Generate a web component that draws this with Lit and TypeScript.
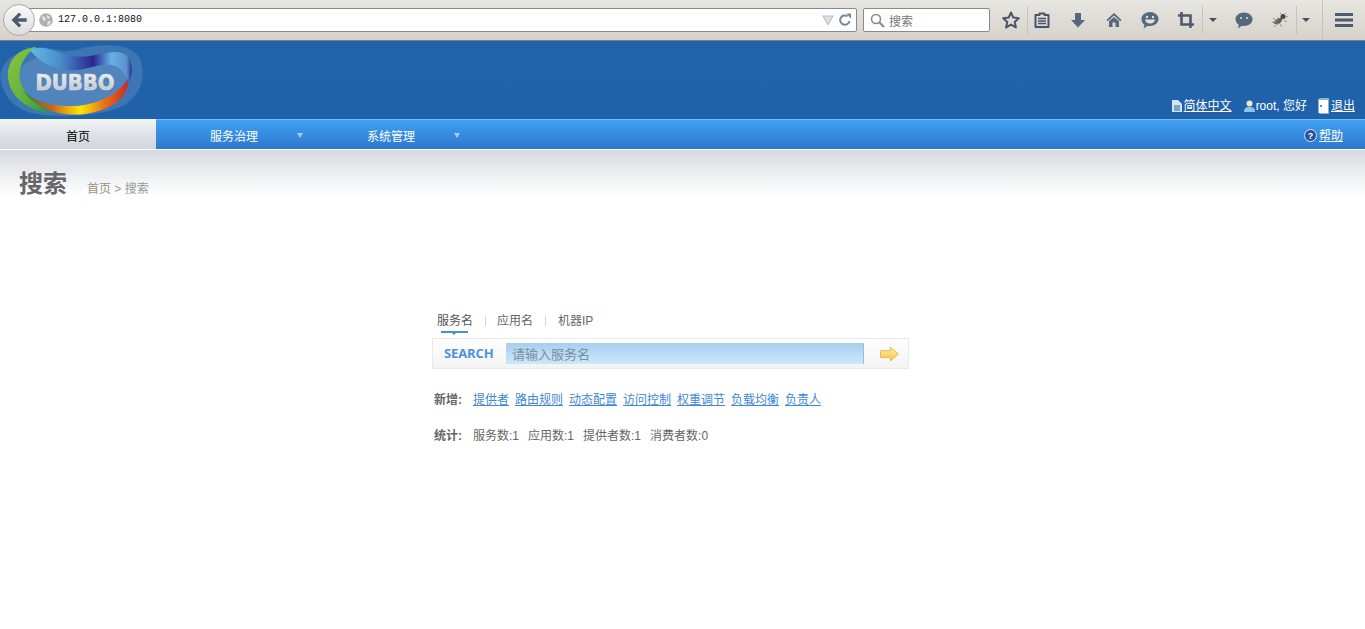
import { LitElement, css, html, svg } from 'lit';
import { customElement, state } from 'lit/decorators.js';

const links = ['提供者', '路由规则', '动态配置', '访问控制', '权重调节', '负载均衡', '负责人'];
const stats = ['服务数:1', '应用数:1', '提供者数:1', '消费者数:0'];

const star = svg`<path d="M9 1.500l2.300 5.100 5.500.6-4.100 3.700 1.200 5.500L9 13.600l-4.900 2.800 1.200-5.500L1.200 7.200l5.500-.6z" fill="none" stroke="#465568" stroke-width="2" stroke-linejoin="round"/>`;
const clipboard = svg`<path d="M6.500 2.500h5v1.500h4v12h-13V4h4z" fill="none" stroke="#465568" stroke-width="2" stroke-linejoin="round"/><path d="M5 7.500h8M5 10h8M5 12.500h8" stroke="#465568" stroke-width="1.500"/>`;
const download = svg`<path d="M6 2h6v7h4l-7 7.500L2 9h4z" fill="#56687c"/>`;
const home = svg`<path d="M9 2L1.500 9l1.200 1.200L9 4.600l6.300 5.600L16.500 9 9 2z" fill="#56687c"/><path d="M4 10.200L9 6l5 4.200V16h-3.500v-4.500h-3V16H4z" fill="#56687c"/>`;
const smile = svg`<path d="M9 1c4.600 0 8.500 2.900 8.500 7s-3.900 7-8.500 7c-.8 0-1.500-.1-2.200-.2L2.500 17.500l1-3.700C1.500 12.500.5 10.400.5 8 .5 3.900 4.400 1 9 1z" fill="#56687c"/><circle cx="6" cy="6" r="1.200" fill="#e4e1da"/><circle cx="12" cy="6" r="1.200" fill="#e4e1da"/><path d="M4 8.500h10c-.4 2.500-2.400 4-5 4s-4.600-1.500-5-4z" fill="#e4e1da"/>`;
const crop = svg`<path d="M4.500 1v12.500H17M1 4.500h12.500V17" fill="none" stroke="#4c5c6f" stroke-width="2.600"/>`;
const bubble = svg`<path d="M9 1.500c4.600 0 8.500 2.800 8.500 6.800s-3.900 6.700-8.500 6.700c-.8 0-1.500-.1-2.200-.2L3 17.500l.8-3.700C1.800 12.500.5 10.500.5 8.300.5 4.300 4.400 1.500 9 1.500z" fill="#56687c"/><circle cx="6" cy="7" r="1" fill="#e4e1da"/><circle cx="12" cy="7" r="1" fill="#e4e1da"/>`;
const bug = svg`<path d="M2 12c2-3 5-5 9-5.500 1 2.500-1 6-5 7z" fill="#5b5e62"/><circle cx="12" cy="5.500" r="2.500" fill="#44474a"/><path d="M2 7l5 3M1 11l5 0M3 16l4-4M9 2l2 2M15 2l-2 2M13 9l3 2M9 13l2 3M17 5l-3 1M6 6l2 2" stroke="#8a8c8e" stroke-width=".9"/>`;
const menu = svg`<path d="M0 3.500h18M0 9h18M0 14.500h18" stroke="#4c5c6f" stroke-width="2.800" stroke-linecap="round"/>`;

@customElement('app-root')
export class AppRoot extends LitElement {
  @state() activeTab = 0;

  static styles = css`
    :host {
      display: block;
      min-height: 100vh;
      background: #fff;
      font-family: 'Liberation Sans', 'Noto Sans CJK SC', sans-serif;
      font-size: 12px;
      color: #666;
      overflow: hidden;
    }

    a {
      color: inherit;
    }

    .browser {
      position: relative;
      display: flex;
      align-items: center;
      height: 40px;
      padding-left: 20px;
      background: linear-gradient(#e8e6e2, #d6d2cb);
      border-bottom: 1px solid #7f7d78;
    }

    .back {
      position: absolute;
      left: 3px;
      top: 4px;
      width: 30px;
      height: 30px;
      display: flex;
      align-items: center;
      justify-content: center;
      border: 1px solid #a9a9a9;
      border-radius: 50%;
      background: linear-gradient(#fafafa, #dcdcdc);
    }

    .url {
      display: flex;
      align-items: center;
      box-sizing: border-box;
      width: 837px;
      height: 24px;
      padding-left: 18px;
      border: 1px solid #8a8a8a;
      border-radius: 2px;
      background: #fff;
    }

    .url-text {
      margin-left: 5px;
      font: 10px/14px 'Liberation Mono', monospace;
      color: #111;
      flex: 1;
    }

    .url svg {
      display: block;
    }

    .dropmark,
    .reload {
      margin-right: 4px;
    }

    .search {
      display: flex;
      align-items: center;
      gap: 4px;
      box-sizing: border-box;
      width: 127px;
      height: 24px;
      margin-left: 6px;
      padding-left: 6px;
      border: 1px solid #8a8a8a;
      border-radius: 2px;
      background: #fff;
      font-size: 12px;
      color: #777;
    }

    .tools {
      display: flex;
      align-items: center;
      height: 100%;
      margin-left: 8px;
    }

    .tool {
      display: flex;
      align-items: center;
      justify-content: center;
      width: 36px;
      height: 100%;
    }

    .tool.w26 {
      width: 26px;
    }
    .tool.w18 {
      width: 18px;
    }
    .tool.w44 {
      width: 44px;
    }
    .tool.w28 {
      width: 28px;
    }
    .tool.w24 {
      width: 24px;
    }
    .tool.end {
      width: 47px;
      justify-content: flex-end;
      padding-right: 12px;
      box-sizing: border-box;
    }

    .caret-dark {
      width: 0;
      height: 0;
      border: 4px solid transparent;
      border-top-color: #45525f;
      border-bottom-width: 0;
    }

    .sep {
      flex: none;
      width: 1px;
      height: 28px;
      background: #c6c3bd;
    }
    .sep.a {
      margin: 0 -4px 0 3px;
    }
    .sep.b {
      margin: 0 1px 0 -2px;
    }
    .sep.c {
      margin: 0 -3px 0 2px;
    }
    .sep.d {
      height: 40px;
      margin: 0 -5px 0 4px;
    }

    .header {
      display: flex;
      justify-content: space-between;
      align-items: flex-end;
      height: 78px;
      background: linear-gradient(#2063ab, #1f62aa);
      color: #fff;
    }

    .logo {
      display: block;
      width: 144px;
      height: 78px;
    }

    .user {
      display: flex;
      align-items: center;
      height: 18px;
      margin-bottom: 4px;
      padding-right: 10px;
      line-height: 18px;
    }

    .user svg {
      display: block;
      margin-right: 2px;
    }

    .user .item {
      display: flex;
      align-items: center;
      margin-left: 11px;
    }

    .user .item.me {
      margin-left: 12px;
    }

    .user .item.me svg {
      margin-right: 1px;
    }

    .nav {
      display: flex;
      height: 31px;
      box-sizing: border-box;
      background: linear-gradient(#3ea1f3, #2f77cb);
      border-top: 1px solid #77bcf5;
      border-bottom: 1px solid #fff;
      color: #fff;
      line-height: 34px;
    }

    .nav .home {
      width: 156px;
      margin-top: -1px;
      padding-top: 1px;
      text-align: center;
      color: #000;
      background: linear-gradient(#f4f5f7, #dfe2e8 50%, #cfd4de);
    }

    .nav .item {
      position: relative;
      width: 157px;
      box-sizing: border-box;
      padding-left: 54px;
    }

    .caret-light {
      position: absolute;
      left: 141px;
      top: 13px;
      width: 0;
      height: 0;
      border: 3.5px solid transparent;
      border-top: 5px solid #a5cdf3;
      border-bottom: 0;
    }

    .help {
      display: flex;
      align-items: center;
      gap: 2px;
      margin-left: auto;
      padding: 2px 22px 0 0;
    }

    .help svg {
      display: block;
    }

    .page-head {
      display: flex;
      align-items: flex-start;
      gap: 20px;
      height: 46px;
      padding: 16px 0 0 19px;
      box-sizing: border-box;
      background: linear-gradient(#d7dae1, #fff);
    }

    .page-head h1 {
      margin: 0;
      font-size: 24px;
      font-weight: 700;
      line-height: 36px;
      color: #666;
    }

    .crumbs {
      margin-top: 14px;
      font-size: 12px;
      line-height: 18px;
      color: #999;
    }

    .crumbs a {
      color: #a08f80;
      text-decoration: none;
    }

    .panel {
      width: 477px;
      margin: 0 0 0 432px;
      padding-top: 115px;
    }

    .tabs {
      display: flex;
      align-items: center;
      height: 20px;
      padding-left: 5px;
      line-height: 20px;
    }

    .tab {
      position: relative;
      color: #666;
    }

    .tab.active {
      color: #555;
    }

    .tab.active::after {
      content: '';
      position: absolute;
      left: 4px;
      right: 5px;
      bottom: -2px;
      height: 2px;
      background: #4a90d9;
    }

    .tab.active::before {
      content: '';
      position: absolute;
      left: 15px;
      bottom: -4px;
      border: 2px solid transparent;
      border-top-color: #4a90d9;
      border-bottom: 0;
    }

    .divider {
      width: 1px;
      height: 10px;
      margin: 0 11.5px;
      background: #d5d5d5;
    }

    .divider:last-of-type {
      margin: 0 12px;
    }

    .box {
      display: flex;
      align-items: center;
      height: 31px;
      margin-top: 7px;
      box-sizing: border-box;
      border: 1px solid #e9e9e9;
      background: linear-gradient(#fff, #f3f3f3);
    }

    .box .label {
      width: 73px;
      padding-left: 11px;
      box-sizing: border-box;
      font: 700 13px/1 'Open Sans', sans-serif;
      letter-spacing: -0.1px;
      color: #4a93e0;
    }

    .box input {
      width: 358px;
      height: 21px;
      padding: 0 0 0 6px;
      box-sizing: border-box;
      border: none;
      border-right: 1px solid #9dbdd6;
      outline: none;
      background: linear-gradient(#a9cdee, #c9e9fb);
      font: 13px 'Noto Sans CJK SC', sans-serif;
    }

    .box input::placeholder {
      color: #7c8d9c;
      opacity: 1;
    }

    .box svg {
      display: block;
      margin-left: 16px;
    }

    .line {
      display: flex;
      align-items: center;
      height: 18px;
      padding-left: 2px;
      line-height: 18px;
    }

    .line b {
      width: 39px;
      color: #666;
    }

    .add {
      margin-top: 22px;
      gap: 6px;
    }

    .add b {
      margin-right: -6px;
    }

    .add a {
      color: #3f87d8;
    }

    .count {
      margin-top: 18px;
    }

    .count span {
      margin-right: 9px;
    }
  `;

  private icon(shape: unknown) {
    return html`<svg width="18" height="18" viewBox="0 0 18 18">${shape}</svg>`;
  }

  private logo() {
    return html`<svg class="logo" viewBox="0 0 144 78">
      <defs>
        <linearGradient id="green" x1="0" y1="0" x2="1" y2="1">
          <stop offset="0" stop-color="#8cc63f" />
          <stop offset="0.6" stop-color="#5fb03c" />
          <stop offset="1" stop-color="#1f8f55" />
        </linearGradient>
        <linearGradient id="rainbow" x1="0" y1="0" x2="1" y2="0">
          <stop offset="0" stop-color="#2d7d3c" />
          <stop offset="0.28" stop-color="#c8651c" />
          <stop offset="0.55" stop-color="#ffe600" />
          <stop offset="0.78" stop-color="#e6711a" />
          <stop offset="1" stop-color="#cc2a1e" />
        </linearGradient>
        <linearGradient id="ribbon" x1="0" y1="0" x2="1" y2="0">
          <stop offset="0" stop-color="#62bbe8" />
          <stop offset="0.3" stop-color="#4a8cc8" />
          <stop offset="0.62" stop-color="#2a2590" />
          <stop offset="0.8" stop-color="#66b2e4" />
          <stop offset="0.95" stop-color="#5a90cc" />
          <stop offset="1" stop-color="#2b2a8c" />
        </linearGradient>
        <linearGradient id="silver" x1="0" y1="0" x2="0" y2="1">
          <stop offset="0" stop-color="#f6f6f6" />
          <stop offset="1" stop-color="#b9bcc0" />
        </linearGradient>
      </defs>
      <path d="M1 41C-3 24 14 10 32 7c18-2 30 5 44 2 16-5 52-10 63 7 8 14 4 40-19 50-22 10-66 11-88 6C14 68 5 56 1 41z" fill="#fff" opacity=".13" />
      <path d="M19 38C17 23 34 15 52 15c16 0 26 3 40 1 14-1 29 1 33 12 5 14-6 28-22 33-18 6-42 7-58 2-14-4-24-13-26-25z" fill="#fff" opacity=".1" />
      <path d="M37 6C18 7 7 20 8 36c1 18 17 33 44 37C38 64 24 54 20 40 18 24 26 12 37 6z" fill="url(#green)" />
      <path d="M22 48c10 13 33 18 53 17 21-1 43-11 53-27 1 20-18 31-43 35-25 3-50-5-63-25z" fill="url(#rainbow)" />
      <path d="M30 9c8-4 18-2 28 2s20 6 32 4c12-2 22-6 32-3 11 4 12 18 7 31-3-9-8-17-17-19-16-2-28 7-44 5C52 27 40 22 30 9z" fill="url(#ribbon)" />
      <text x="75" y="49" text-anchor="middle" textLength="79" lengthAdjust="spacingAndGlyphs" font-family="DejaVu Sans" font-weight="700" font-size="22" fill="url(#silver)" stroke="#e0e0e0" stroke-width=".6">DUBBO</text>
    </svg>`;
  }

  render() {
    return html`
      <div class="browser">
        <div class="back">
          <svg width="20" height="20" viewBox="0 0 20 20">
            <path d="M10 2.500L2.500 10l7.500 7.500 2.300-2.300-3.600-3.500h9v-3.400h-9l3.600-3.500z" fill="#4c5c6f" />
          </svg>
        </div>
        <div class="url">
          <svg width="14" height="14" viewBox="0 0 14 14">
            <circle cx="7" cy="7" r="6.800" fill="#b0b0b0" />
            <path d="M3 3l3 1 1 3-3 1zM8 2l3 2-1 2-2-1zM9 8l3 0-2 4-2 0z" fill="#e4e4e4" />
          </svg>
          <span class="url-text">127.0.0.1:8080</span>
          <svg class="dropmark" width="12" height="12" viewBox="0 0 12 12">
            <path d="M1 2h10L6 10.500z" fill="#dde3e8" stroke="#b7c2cc" stroke-width="1.200" />
          </svg>
          <svg class="reload" width="14" height="14" viewBox="0 0 14 14">
            <path d="M11.500 8A4.700 4.700 0 1 1 9.500 3.200" fill="none" stroke="#778a9c" stroke-width="2" />
            <path d="M8.500 .5L13 .5V6z" fill="#778a9c" />
          </svg>
        </div>
        <div class="search">
          <svg width="15" height="15" viewBox="0 0 15 15">
            <circle cx="6" cy="6" r="4.500" fill="none" stroke="#8b8b8b" stroke-width="1.600" />
            <path d="M9.500 9.500L14 14" stroke="#8b8b8b" stroke-width="2.200" />
          </svg>
          搜索
        </div>
        <div class="tools">
          <div class="tool w26">${this.icon(star)}</div>
          <div class="sep a"></div>
          <div class="tool">${this.icon(clipboard)}</div>
          <div class="tool">${this.icon(download)}</div>
          <div class="tool">${this.icon(home)}</div>
          <div class="tool">${this.icon(smile)}</div>
          <div class="tool">${this.icon(crop)}</div>
          <div class="sep b"></div>
          <div class="tool w18"><div class="caret-dark"></div></div>
          <div class="tool w44">${this.icon(bubble)}</div>
          <div class="tool w28">${this.icon(bug)}</div>
          <div class="sep c"></div>
          <div class="tool w24"><div class="caret-dark"></div></div>
          <div class="sep d"></div>
          <div class="tool end">${this.icon(menu)}</div>
        </div>
      </div>

      <div class="header">
        ${this.logo()}
        <div class="user">
          <span class="item">
            <svg width="10" height="12" viewBox="0 0 10 12">
              <path d="M0 0h6l4 4v8H0z" fill="#d5e3f2" />
              <path d="M2 6h6M2 8h6M2 10h6" stroke="#2063ab" />
            </svg>
            <a href="#">简体中文</a>
          </span>
          <span class="item me">
            <svg width="11" height="12" viewBox="0 0 11 12">
              <circle cx="5.500" cy="3.500" r="3" fill="#f3e6c4" />
              <path d="M0 12c0-4 2-5 5.500-5S11 8 11 12z" fill="#8fc3ee" />
            </svg>
            root, 您好
          </span>
          <span class="item">
            <svg width="11" height="16" viewBox="0 0 11 16">
              <path d="M0 1l3-1h8v16H3l-3-1z" fill="#8cb6e0" />
              <path d="M1 2h9v13H1z" fill="#fff" />
              <circle cx="3" cy="8" r="1" fill="#2063ab" />
            </svg>
            <a href="#">退出</a>
          </span>
        </div>
      </div>

      <div class="nav">
        <div class="home">首页</div>
        <div class="item">服务治理<i class="caret-light"></i></div>
        <div class="item">系统管理<i class="caret-light"></i></div>
        <div class="help">
          <svg width="13" height="13" viewBox="0 0 13 13">
            <circle cx="6.500" cy="6.500" r="6" fill="#2c4fa0" stroke="#d7e6f7" />
            <text x="6.500" y="10" text-anchor="middle" font-size="9" font-weight="700" fill="#fff">?</text>
          </svg>
          <a href="#">帮助</a>
        </div>
      </div>

      <div class="page-head">
        <h1>搜索</h1>
        <div class="crumbs"><a href="#">首页</a> &gt; 搜索</div>
      </div>

      <div class="panel">
        <div class="tabs">
          <span class="tab active">服务名</span>
          <i class="divider"></i>
          <span class="tab">应用名</span>
          <i class="divider"></i>
          <span class="tab">机器IP</span>
        </div>
        <div class="box">
          <span class="label">SEARCH</span>
          <input placeholder="请输入服务名" />
          <svg width="19" height="16" viewBox="0 0 20 16">
            <defs>
              <linearGradient id="arrow" x1="0" y1="0" x2="0" y2="1">
                <stop offset="0" stop-color="#fff0b0" />
                <stop offset="1" stop-color="#fdc04a" />
              </linearGradient>
            </defs>
            <path d="M.5 4.500h10.500V.7L19.300 8 11 15.300V11.500H.5z" fill="url(#arrow)" stroke="#e8b53c" />
          </svg>
        </div>
        <div class="line add">
          <b>新增:</b>
          ${links.map((l) => html`<a href="#">${l}</a>`)}
        </div>
        <div class="line count">
          <b>统计:</b>
          ${stats.map((s) => html`<span>${s}</span>`)}
        </div>
      </div>
    `;
  }
}
